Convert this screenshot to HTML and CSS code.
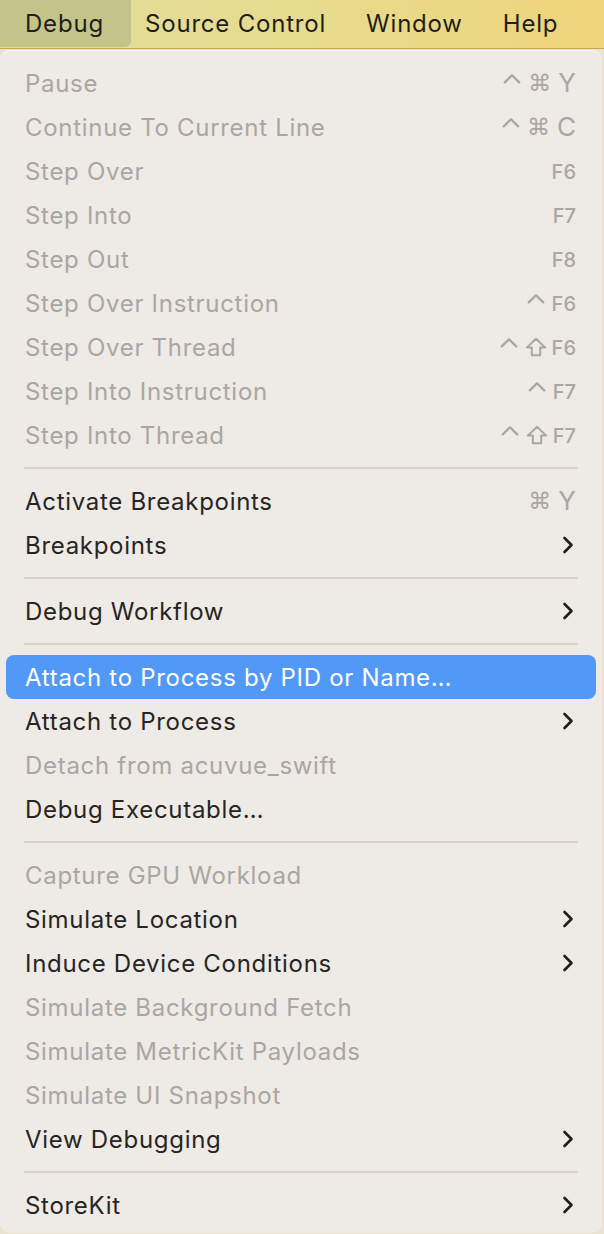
FILE: index.html
```html
<!DOCTYPE html>
<html lang="en">
<head>
<meta charset="utf-8">
<title>Debug menu</title>
<link rel="stylesheet" href="styles.css">
</head>
<body>
<div class="menubar">
  <span class="mb-item mb-active">Debug</span>
  <span class="mb-item">Source Control</span>
  <span class="mb-item">Window</span>
  <span class="mb-item">Help</span>
</div>
<div class="panel">
  <div class="row off"><span class="label">Pause</span><span class="keys"><span class="k ctrl"><svg viewBox="0 0 18 11" width="18" height="11"><path d="M1.8 9.4 L9 2.2 L16.2 9.4" fill="none" stroke="currentColor" stroke-width="2.3" stroke-linecap="round" stroke-linejoin="round"/></svg></span><span class="k cmd">⌘</span><span class="k big">Y</span></span></div>
  <div class="row off"><span class="label">Continue To Current Line</span><span class="keys"><span class="k ctrl"><svg viewBox="0 0 18 11" width="18" height="11"><path d="M1.8 9.4 L9 2.2 L16.2 9.4" fill="none" stroke="currentColor" stroke-width="2.3" stroke-linecap="round" stroke-linejoin="round"/></svg></span><span class="k cmd">⌘</span><span class="k big">C</span></span></div>
  <div class="row off"><span class="label">Step Over</span><span class="keys"><span class="k fk">F6</span></span></div>
  <div class="row off"><span class="label">Step Into</span><span class="keys"><span class="k fk">F7</span></span></div>
  <div class="row off"><span class="label">Step Out</span><span class="keys"><span class="k fk">F8</span></span></div>
  <div class="row off"><span class="label">Step Over Instruction</span><span class="keys"><span class="k ctrl"><svg viewBox="0 0 18 11" width="18" height="11"><path d="M1.8 9.4 L9 2.2 L16.2 9.4" fill="none" stroke="currentColor" stroke-width="2.3" stroke-linecap="round" stroke-linejoin="round"/></svg></span><span class="k fk">F6</span></span></div>
  <div class="row off"><span class="label">Step Over Thread</span><span class="keys"><span class="k ctrl"><svg viewBox="0 0 18 11" width="18" height="11"><path d="M1.8 9.4 L9 2.2 L16.2 9.4" fill="none" stroke="currentColor" stroke-width="2.3" stroke-linecap="round" stroke-linejoin="round"/></svg></span><span class="k shift"><svg viewBox="0 0 22 20" width="22" height="20"><path d="M11 1.8 L20.2 10.6 H15.2 V18.2 H6.8 V10.6 H1.8 Z" fill="none" stroke="currentColor" stroke-width="2" stroke-linejoin="round"/></svg></span><span class="k fk">F6</span></span></div>
  <div class="row off"><span class="label">Step Into Instruction</span><span class="keys"><span class="k ctrl"><svg viewBox="0 0 18 11" width="18" height="11"><path d="M1.8 9.4 L9 2.2 L16.2 9.4" fill="none" stroke="currentColor" stroke-width="2.3" stroke-linecap="round" stroke-linejoin="round"/></svg></span><span class="k fk">F7</span></span></div>
  <div class="row off"><span class="label">Step Into Thread</span><span class="keys"><span class="k ctrl"><svg viewBox="0 0 18 11" width="18" height="11"><path d="M1.8 9.4 L9 2.2 L16.2 9.4" fill="none" stroke="currentColor" stroke-width="2.3" stroke-linecap="round" stroke-linejoin="round"/></svg></span><span class="k shift"><svg viewBox="0 0 22 20" width="22" height="20"><path d="M11 1.8 L20.2 10.6 H15.2 V18.2 H6.8 V10.6 H1.8 Z" fill="none" stroke="currentColor" stroke-width="2" stroke-linejoin="round"/></svg></span><span class="k fk">F7</span></span></div>
  <div class="sep"></div>
  <div class="row"><span class="label">Activate Breakpoints</span><span class="keys"><span class="k cmd">⌘</span><span class="k big">Y</span></span></div>
  <div class="row"><span class="label">Breakpoints</span><span class="chev"><svg viewBox="0 0 12 18" width="12" height="18"><path d="M2.5 2 L9.5 9 L2.5 16" fill="none" stroke="currentColor" stroke-width="2.6" stroke-linecap="round" stroke-linejoin="round"/></svg></span></div>
  <div class="sep"></div>
  <div class="row"><span class="label">Debug Workflow</span><span class="chev"><svg viewBox="0 0 12 18" width="12" height="18"><path d="M2.5 2 L9.5 9 L2.5 16" fill="none" stroke="currentColor" stroke-width="2.6" stroke-linecap="round" stroke-linejoin="round"/></svg></span></div>
  <div class="sep"></div>
  <div class="row hl"><span class="label">Attach to Process by PID or Name…</span></div>
  <div class="row"><span class="label">Attach to Process</span><span class="chev"><svg viewBox="0 0 12 18" width="12" height="18"><path d="M2.5 2 L9.5 9 L2.5 16" fill="none" stroke="currentColor" stroke-width="2.6" stroke-linecap="round" stroke-linejoin="round"/></svg></span></div>
  <div class="row off"><span class="label">Detach from acuvue_swift</span></div>
  <div class="row"><span class="label">Debug Executable…</span></div>
  <div class="sep"></div>
  <div class="row off"><span class="label">Capture GPU Workload</span></div>
  <div class="row"><span class="label">Simulate Location</span><span class="chev"><svg viewBox="0 0 12 18" width="12" height="18"><path d="M2.5 2 L9.5 9 L2.5 16" fill="none" stroke="currentColor" stroke-width="2.6" stroke-linecap="round" stroke-linejoin="round"/></svg></span></div>
  <div class="row"><span class="label">Induce Device Conditions</span><span class="chev"><svg viewBox="0 0 12 18" width="12" height="18"><path d="M2.5 2 L9.5 9 L2.5 16" fill="none" stroke="currentColor" stroke-width="2.6" stroke-linecap="round" stroke-linejoin="round"/></svg></span></div>
  <div class="row off"><span class="label">Simulate Background Fetch</span></div>
  <div class="row off"><span class="label">Simulate MetricKit Payloads</span></div>
  <div class="row off"><span class="label">Simulate UI Snapshot</span></div>
  <div class="row"><span class="label">View Debugging</span><span class="chev"><svg viewBox="0 0 12 18" width="12" height="18"><path d="M2.5 2 L9.5 9 L2.5 16" fill="none" stroke="currentColor" stroke-width="2.6" stroke-linecap="round" stroke-linejoin="round"/></svg></span></div>
  <div class="sep"></div>
  <div class="row"><span class="label">StoreKit</span><span class="chev"><svg viewBox="0 0 12 18" width="12" height="18"><path d="M2.5 2 L9.5 9 L2.5 16" fill="none" stroke="currentColor" stroke-width="2.6" stroke-linecap="round" stroke-linejoin="round"/></svg></span></div>
</div>
</body>
</html>
```
FILE: styles.css
```css
html, body {
  margin: 0;
  padding: 0;
}
body {
  width: 604px;
  height: 1234px;
  overflow: hidden;
  background: #e9e4cf;
  font-family: "Inter", "Roboto", "Liberation Sans", sans-serif;
  color: #262523;
}
.menubar {
  height: 48px;
  display: flex;
  align-items: stretch;
  background: linear-gradient(90deg, #e0dd9c 0%, #e6dc90 45%, #f0d47a 100%);
  border-bottom: 1px solid #c9a44c;
}
.mb-item {
  display: flex;
  align-items: center;
  font-size: 24px;
  letter-spacing: 0.8px;
  color: #1f1f1a;
  padding: 0 20px 1px 20px;
}
.mb-item.mb-active {
  width: 131px;
  box-sizing: border-box;
  padding-left: 25px;
  height: 47px;
  background: #c4c38a;
  border-bottom-right-radius: 6px;
  margin-right: -6px;
}
.panel {
  margin-top: 1px;
  width: 602px;
  box-sizing: border-box;
  background: #eeeae6;
  border-radius: 10px;
  padding: 11px 6px 6px 6px;
  box-shadow: inset 0 1px 0 #fbfaf8;
}
.row {
  height: 44px;
  display: flex;
  align-items: center;
  justify-content: space-between;
  padding: 0 19px;
  font-size: 24px;
  letter-spacing: 0.7px;
  border-radius: 8px;
  color: #262523;
}
.row.off {
  color: #aaa6a2;
}
.row.hl {
  background: #5298f7;
  color: #ffffff;
}
.label {
  white-space: nowrap;
}
.keys {
  display: flex;
  align-items: center;
  height: 24px;
  color: #aaa6a2;
  letter-spacing: 0;
  margin-right: 1px;
}
.k {
  display: inline-flex;
  align-items: center;
  line-height: 1;
}
.k + .k {
  margin-left: 7px;
}
.k svg {
  display: block;
}
.k.ctrl {
  transform: translateY(-5px);
}
.k.cmd {
  font-family: "DejaVu Sans", sans-serif;
  font-size: 23px;
}
.k.big {
  font-size: 26px;
  font-weight: 400;
}
.k.fk {
  font-size: 20px;
  font-weight: 500;
  transform: translateY(1px);
}
.k.shift {
  margin-left: 7px;
}
.k.shift + .k.fk {
  margin-left: 5px;
}
.chev {
  display: flex;
  align-items: center;
  color: #1f1e1c;
  margin-right: 3px;
}
.sep {
  height: 22px;
  display: flex;
  align-items: center;
  margin: 0 18px;
}
.sep::before {
  content: "";
  display: block;
  width: 100%;
  height: 2px;
  background: #d5d0cc;
}
```
